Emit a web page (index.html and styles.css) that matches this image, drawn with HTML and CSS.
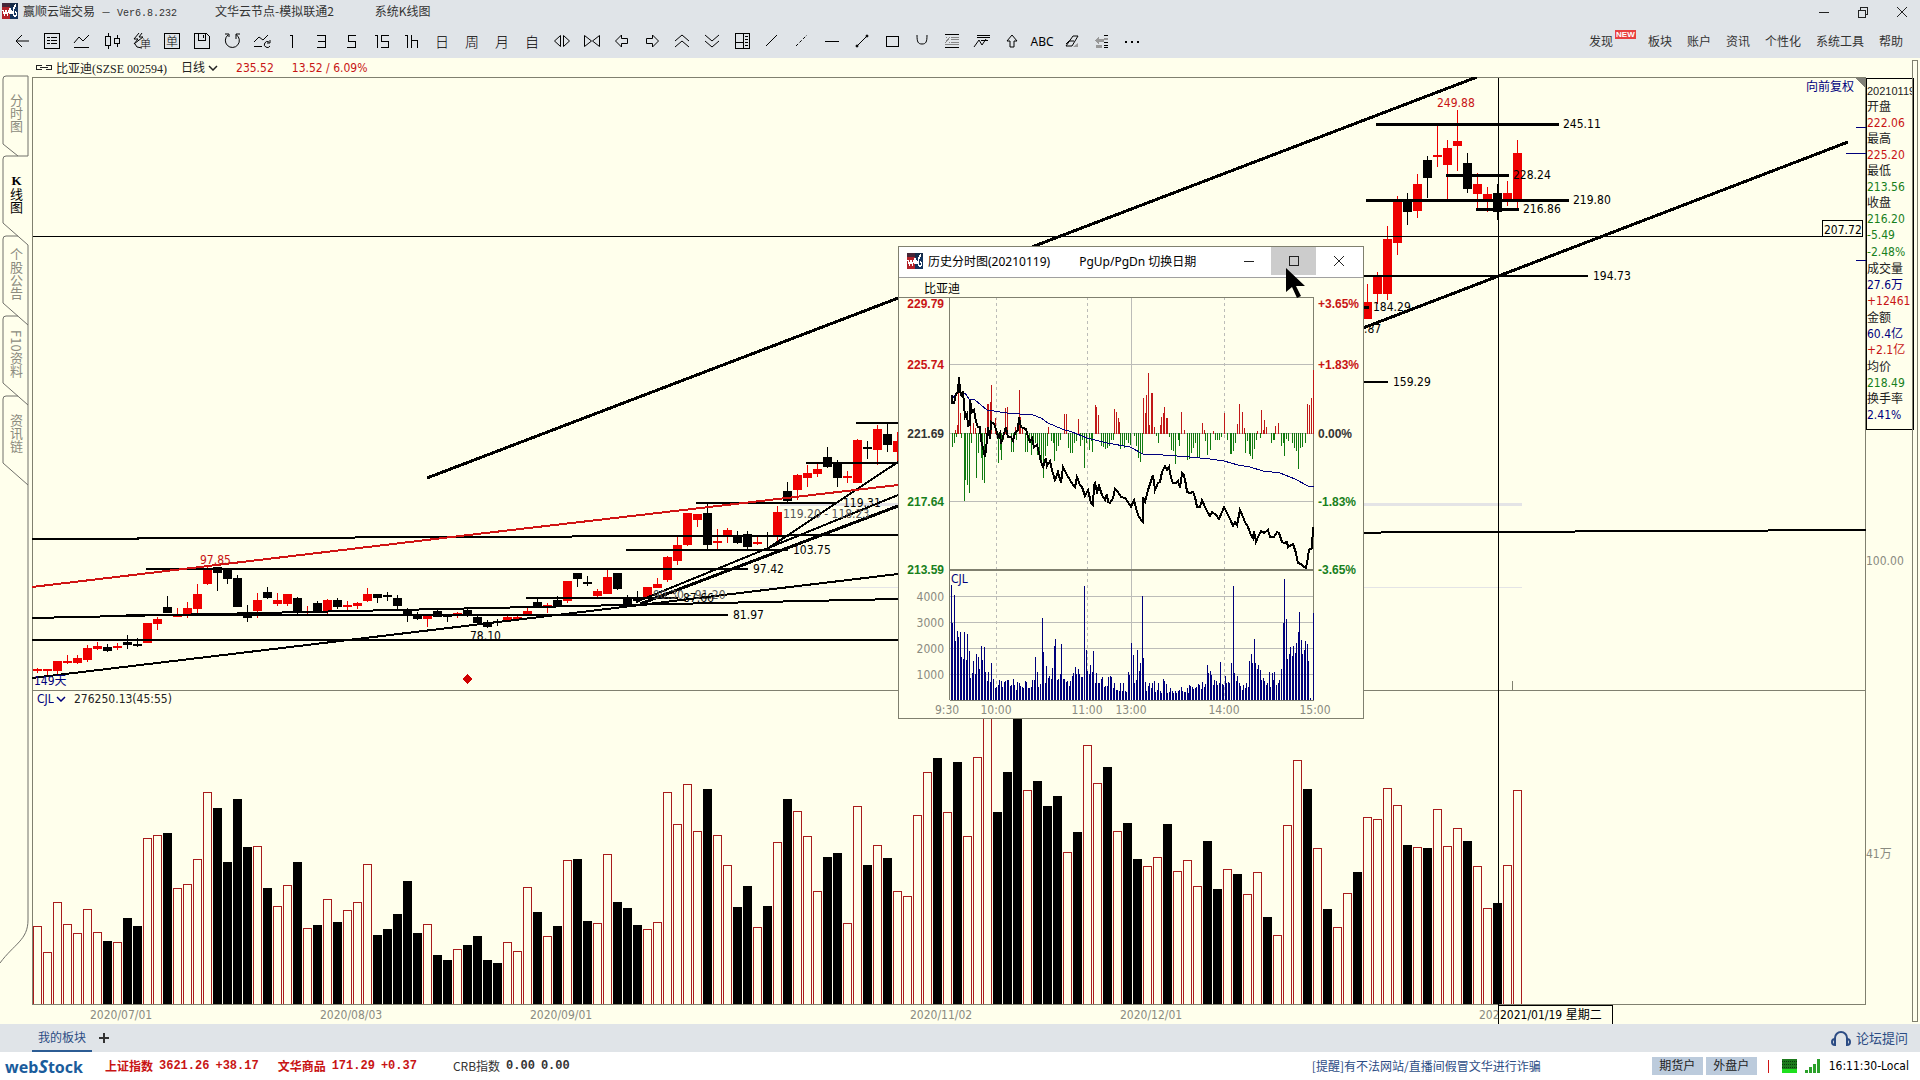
FILE: index.html
```html
<!DOCTYPE html>
<html lang="zh-CN">
<head>
<meta charset="utf-8">
<title>赢顺云端交易</title>
<link rel="stylesheet" href="styles.css">
</head>
<body>
<svg class="defs" aria-hidden="true">
  <symbol id="logo" viewBox="0 0 16 16">
    <path d="M0 0h8v16H0z" fill="#b3222a"/><path d="M8 0h8v16H8z" fill="#14345e"/>
    <path d="M0 0h16v4H0z" fill="#17283f" opacity=".7"/>
    <path d="M1 7l1.500 4L4 8l1.500 3L7 7M8 5v6M8 9c1-2 2-2 2 2M14 2c-3 2-4 10-1 11 2 0 2-4 0-4" fill="none" stroke="#fff" stroke-width="1.500"/>
  </symbol>
  <symbol id="chevron" viewBox="0 0 10 6"><path d="M1 1l4 4 4-4" fill="none" stroke="currentColor" stroke-width="1.500"/></symbol>
</svg>

<header class="header">
  <div class="titlebar">
    <svg class="logo"><use href="#logo"/></svg>
    <h1 class="title">赢顺云端交易<span class="mono">&nbsp;－&nbsp;Ver6.8.232</span></h1>
    <span class="title title-node">文华云节点-模拟联通2</span>
    <span class="title">系统K线图</span>
    <div class="window-controls">
      <button aria-label="最小化"><svg viewBox="0 0 12 12"><path d="M1 6.500h10"/></svg></button>
      <button aria-label="还原"><svg viewBox="0 0 12 12"><path d="M1.500 4.500h7v7h-7zM3.500 4.500v-3h7v7h-2"/></svg></button>
      <button aria-label="关闭"><svg viewBox="0 0 12 12" class="smooth"><path d="M1 1l10 10M11 1L1 11"/></svg></button>
    </div>
  </div>
  <div class="toolbar-row">
    <div class="toolbar">
      <button aria-label="返回"><svg viewBox="0 0 20 20" class="smooth"><path d="M17 10H4M10 4l-6 6 6 6"/></svg></button>
      <button aria-label="报价列表"><svg viewBox="0 0 20 20"><path d="M2.500 2.500h15v15h-15zM5 6.500h3M9 6.500h6M5 9.500h3M9 9.500h6M5 12.500h3M9 12.500h6"/></svg></button>
      <button aria-label="分时"><svg viewBox="0 0 20 20" class="smooth"><path d="M2 12l5-6 4 4 6-6M2 16.500h15"/></svg></button>
      <button aria-label="K线"><svg viewBox="0 0 20 20"><path d="M3.500 5.500h5v9h-5zM6 2v3M6 15v3M12.500 7.500h5v5h-5zM15 4v3M15 13v3"/></svg></button>
      <button class="glyph" aria-label="闪电下单"><svg viewBox="0 0 20 20" class="smooth"><path d="M7 2L2 8h4l-4 5 9-7H7l3-4M3 13l2 3 5 1"/><text x="8" y="17" font-size="11">单</text></svg></button>
      <button class="glyph" aria-label="下单"><svg viewBox="0 0 20 20"><path d="M2.500 2.500h15v15h-15z"/><text x="4" y="15" font-size="12">单</text></svg></button>
      <button aria-label="保存"><svg viewBox="0 0 20 20"><path d="M2.500 2.500h12l3 3v12h-15zM6.500 3v6h7V3M11.500 4v3"/></svg></button>
      <button aria-label="刷新"><svg viewBox="0 0 20 20" class="smooth"><path d="M6 4a7 7 0 1 0 8-.5M14 8V3h4M3 3h4v3"/></svg></button>
      <button aria-label="切换走势"><svg viewBox="0 0 20 20" class="smooth"><path d="M2 11l5-5 4 3 5-5M2 15.500h8M17 11a3 3 0 1 0 1 4M18 9v3h-3"/></svg></button>
      <button aria-label="1分钟"><svg viewBox="0 0 20 20"><path d="M8 4.500h2.500V17"/></svg></button>
      <button aria-label="3分钟"><svg viewBox="0 0 20 20"><path d="M5 4.500h8.500v12H5M6 10.500h7"/></svg></button>
      <button aria-label="5分钟"><svg viewBox="0 0 20 20"><path d="M14 4.500H6.500v6h7v6H5"/></svg></button>
      <button aria-label="15分钟"><svg viewBox="0 0 20 20"><path d="M3 4.500h2.500V17M17 4.500H9.500v6h7v6H9"/></svg></button>
      <button aria-label="1小时"><svg viewBox="0 0 20 20"><path d="M3 4.500h2.500V17M9.500 4v13M9.500 9.500h6V17"/></svg></button>
      <button>日</button>
      <button>周</button>
      <button>月</button>
      <button>自</button>
      <button aria-label="放大"><svg viewBox="0 0 20 20" class="smooth"><path d="M8.500 4.500v11L2.500 10zM11.500 4.500v11l6-5.500z"/></svg></button>
      <button aria-label="缩小"><svg viewBox="0 0 20 20" class="smooth"><path d="M2.500 4.500v11L9.500 10zM17.500 4.500v11L10.500 10z"/></svg></button>
      <button aria-label="左移"><svg viewBox="0 0 20 20" class="smooth"><path d="M3.500 10l6-6v3.500h6v5h-6V16z"/></svg></button>
      <button aria-label="右移"><svg viewBox="0 0 20 20" class="smooth"><path d="M16.500 10l-6-6v3.500h-6v5h6V16z"/></svg></button>
      <button aria-label="上翻"><svg viewBox="0 0 20 20" class="smooth"><path d="M3 10l7-6 7 6M3 16l7-6 7 6"/></svg></button>
      <button aria-label="下翻"><svg viewBox="0 0 20 20" class="smooth"><path d="M3 4l7 6 7-6M3 10l7 6 7-6"/></svg></button>
      <button aria-label="画面组合"><svg viewBox="0 0 20 20"><path d="M3.500 2.500h14v15h-14zM11.500 3v14M4 11.500h7M13 5.500h3M13 8.500h3M13 11.500h3M13 14.500h3"/></svg></button>
      <button aria-label="线段"><svg viewBox="0 0 20 20" class="smooth"><path d="M4 15L15 4"/></svg></button>
      <button aria-label="虚线"><svg viewBox="0 0 20 20" class="smooth"><path d="M4 15L15 4" stroke-dasharray="3 2"/></svg></button>
      <button aria-label="水平线"><svg viewBox="0 0 20 20"><path d="M3 10.500h14"/></svg></button>
      <button aria-label="两点线"><svg viewBox="0 0 20 20" class="smooth"><path d="M5 15L15 5"/><circle cx="5" cy="15" r="1" fill="#000"/><circle cx="15" cy="5" r="1" fill="#000"/></svg></button>
      <button aria-label="矩形"><svg viewBox="0 0 20 20"><path d="M4.500 5.500h12v10h-12z"/></svg></button>
      <button aria-label="弧线"><svg viewBox="0 0 20 20" class="smooth"><path d="M5 4c0 7 1 9 5 9s5-2 5-9"/></svg></button>
      <button aria-label="百分比线"><svg viewBox="0 0 20 20"><path d="M3 3.500h14M3 16.500h14"/><path class="dim" d="M9 6.500h8M9 8.500h8M9 11.500h8M3 13.500h14M3 12l5-6M4 6.500h1M7 11.500h1"/></svg></button>
      <button aria-label="压力线"><svg viewBox="0 0 20 20"><path d="M5 4.500h13M5 6.500h13M9 9.500h7"/><path class="smooth" d="M2 16l5-7 3 5 4-6"/></svg></button>
      <button aria-label="箭头"><svg viewBox="0 0 20 20" class="smooth"><path d="M10 4l-5 6h3v6h4v-6h3z"/></svg></button>
      <button class="abc">ABC</button>
      <button aria-label="橡皮"><svg viewBox="0 0 20 20" class="smooth"><path class="dimfill" d="M11 16l5-4v4z"/><path d="M4 15l7-10h5l-6 10zM4 13l3-3h5"/></svg></button>
      <button aria-label="工具面板"><svg viewBox="0 0 20 20"><path class="dimfill" d="M3 9l4-4v3h5v3H7v3zM4 14h6v3H4zM12 7h4v2h-4z"/><path d="M12 4.500h4M12 11.500h4M12 14.500h4M12 16.500h4"/></svg></button>
      <button aria-label="更多"><svg viewBox="0 0 20 20"><path d="M3 11h2M9 11h2M15 11h2" stroke-width="2"/></svg></button>
    </div>
    <nav class="menu">
      <a href="#" class="has-badge">发现<span class="badge">NEW</span></a>
      <a href="#">板块</a><a href="#">账户</a><a href="#">资讯</a><a href="#">个性化</a><a href="#">系统工具</a><a href="#">帮助</a>
    </nav>
  </div>
</header>

<main class="workspace">
  <nav class="rail">
    <svg class="rail-lines" viewBox="0 0 32 966"><path d="M28 18H6q-3 0-3 3v65l15 12M28 18v80H6q-3 0-3 3v64l25 22M18 178H6q-3 0-3 3v64l25 22M18 258H6q-3 0-3 3v64l25 22M18 338H6q-3 0-3 3v64l25 22M28 187v675c0 20-14 24-28 43"/></svg>
    <button class="tab">分时图</button>
    <button class="tab tab-active"><b class="upright">K</b>线图</button>
    <button class="tab">个股公告</button>
    <button class="tab">F10资料</button>
    <button class="tab">资讯链</button>
  </nav>

  <section class="chart-area">
    <div class="infobar">
      <svg class="chain" viewBox="0 0 18 8"><path d="M7 1.500H1.500v4H7M11 1.500h5.500v4H11M5 3.500h8"/></svg>
      <span class="symbol">比亚迪(SZSE 002594)</span>
      <span class="picker"><select aria-label="周期"><option>日线</option></select><svg><use href="#chevron"/></svg></span>
      <span class="red quote">235.52</span>
      <span class="red quote">13.52 / 6.09%</span>
    </div>
    <div class="chart-box">
      <svg class="chart" viewBox="32 77 1834 947">
        <g id="candles"></g>
        <g id="volumes"></g>
        <path class="frame" d="M32 77.500H1866M32.500 77V1004M1865.500 77V1004M32 1004.500H1866M32 690.500H1866M1512.500 681v9"/>
        <path class="pale wide" d="M780 504.500H898M1363 504.500H1522"/>
        <path class="pale" d="M700 587.500H898M1363 587.500H1522"/>
        <g class="ink">
          <path class="w3" d="M427 478L1477 77M1363 328L1848 142M640 604L898 506M1376 124.500H1559M1446 175.500H1509M1366 200.500H1569M1476 209.500H1519M1363 307.500H1369"/>
          <path class="w2" d="M1363 276H1588M1363 382H1388M32 539L898 535 1866 530M146 569H748M126 615H728M32 618L898 599M32 640H898M32 678L898 574M636 602L898 495M767 549L898 462M696 503H837M626 550H788M526 598H678M856 423H898M806 463H898"/>
          <path class="cross" d="M33 236.500H1863M1498.500 78V1024"/>
        </g>
        <path class="trend" d="M32 587L460 536 898 485"/>
        <path d="M467 674l5 5-5 5-5-5z" fill="#d00000"/>
        <path d="M1856 78h9v10z" fill="#808078"/>
        <path class="tick" d="M1856 127.500h10M1846 153.500h20M1856 260.500h10"/>
        <g class="labels">
          <text x="1437" y="107" class="f-red">249.88</text>
          <text x="1563" y="128">245.11</text>
          <text x="1513" y="179">228.24</text>
          <text x="1573" y="204">219.80</text>
          <text x="1523" y="213">216.86</text>
          <text x="1593" y="280">194.73</text>
          <text x="1373" y="311">184.29</text>
          <text x="1364" y="333">.87</text>
          <text x="1393" y="386">159.29</text>
          <text x="200" y="564" class="f-red">97.85</text>
          <text x="843" y="507">119.31</text>
          <text x="783" y="518" class="f-soft">119.20 - 118.23</text>
          <text x="793" y="554">103.75</text>
          <text x="753" y="573">97.42</text>
          <text x="653" y="599" class="f-soft">90.30 - 91.20</text>
          <text x="683" y="602">87.66</text>
          <text x="733" y="619">81.97</text>
          <text x="470" y="640">78.10</text>
          <text x="34" y="685" class="f-navy">149天</text>
          <text x="1806" y="91" class="f-navy">向前复权</text>
          <g class="f-gray">
            <text x="90" y="1019">2020/07/01</text>
            <text x="320" y="1019">2020/08/03</text>
            <text x="530" y="1019">2020/09/01</text>
            <text x="910" y="1019">2020/11/02</text>
            <text x="1120" y="1019">2020/12/01</text>
            <text x="1479" y="1019">202</text>
          </g>
          <path class="callout" d="M1822.500 220.500h40v16h-40zM1498.500 1024v-18.500h114V1024"/>
          <text x="1824" y="234">207.72</text>
          <text x="1500" y="1019">2021/01/19 星期二</text>
        </g>
      </svg>

      <div class="indicator">
        <span class="picker navy"><select aria-label="指标"><option>CJL</option></select><svg><use href="#chevron"/></svg></span>
        <span>276250.13(45:55)</span>
      </div>

      <section class="popup">
        <header class="popup-title">
          <svg class="logo"><use href="#logo"/></svg>
          <h2>历史分时图(20210119)</h2>
          <span>PgUp/PgDn 切换日期</span>
          <div class="popup-controls">
            <button aria-label="最小化"><svg viewBox="0 0 12 12"><path d="M1 6.500h10"/></svg></button>
            <button class="hover" aria-label="最大化"><svg viewBox="0 0 12 12"><path d="M1.500 1.500h9v9h-9z"/></svg></button>
            <button aria-label="关闭"><svg viewBox="0 0 12 12" class="smooth"><path d="M1 1l10 10M11 1L1 11"/></svg></button>
          </div>
        </header>
        <svg class="intraday" viewBox="899 278 464 440">
          <path class="grid" d="M950 364.500H1313M950 433.500H1313M950 501.500H1313M950 596.500H1313M950 622.500H1313M950 648.500H1313M950 674.500H1313M1131.500 297V700"/>
          <path class="grid dashed" d="M996.500 297V700M1087.500 297V700M1224.500 297V700"/>
          <path class="frame" d="M899 297.500H1314M949.500 297V700M1313.500 297V700M950 700.500H1314"/>
          <path class="frame strong" d="M950 570H1314"/>
          <g id="flow"></g>
          <g id="minute-volume"></g>
          <polyline id="average" class="average"/>
          <polyline id="price" class="price"/>
          <text x="924" y="293" class="name">比亚迪</text>
          <g class="scale" text-anchor="end">
            <text x="944" y="308" class="f-red">229.79</text>
            <text x="944" y="369" class="f-red">225.74</text>
            <text x="944" y="438">221.69</text>
            <text x="944" y="506" class="f-green">217.64</text>
            <text x="944" y="574" class="f-green">213.59</text>
          </g>
          <g class="scale">
            <text x="1318" y="308" class="f-red">+3.65%</text>
            <text x="1318" y="369" class="f-red">+1.83%</text>
            <text x="1318" y="438">0.00%</text>
            <text x="1318" y="506" class="f-green">-1.83%</text>
            <text x="1318" y="574" class="f-green">-3.65%</text>
          </g>
          <text x="951" y="583" class="f-navy">CJL</text>
          <g class="f-gray" text-anchor="end">
            <text x="944" y="601">4000</text><text x="944" y="627">3000</text><text x="944" y="653">2000</text><text x="944" y="679">1000</text>
          </g>
          <g class="f-gray" text-anchor="middle">
            <text x="947" y="714">9:30</text><text x="996" y="714">10:00</text><text x="1087" y="714">11:00</text><text x="1131" y="714">13:00</text><text x="1224" y="714">14:00</text><text x="1315" y="714">15:00</text>
          </g>
        </svg>
        <svg class="pointer" viewBox="0 0 19 30"><path d="M0 0v24l6-5 5 11 4-2-5-10h9z"/></svg>
      </section>
    </div>
  </section>

  <aside class="side">
    <dl class="data">
      <dt class="date">20210119</dt>
      <dt>开盘</dt><dd class="red">222.06</dd>
      <dt>最高</dt><dd class="red">225.20</dd>
      <dt>最低</dt><dd class="green">213.56</dd>
      <dt>收盘</dt><dd class="green">216.20</dd><dd class="green delta">-5.49</dd><dd class="green delta">-2.48%</dd>
      <dt>成交量</dt><dd class="navy">27.6万</dd><dd class="red delta">+12461</dd>
      <dt>金额</dt><dd class="navy">60.4亿</dd><dd class="red delta">+2.1亿</dd>
      <dt>均价</dt><dd class="green">218.49</dd>
      <dt>换手率</dt><dd class="navy">2.41%</dd>
    </dl>
    <span class="axis">100.00</span>
    <span class="axis axis-volume">41万</span>
  </aside>
</main>

<nav class="boards">
  <a href="#" class="board">我的板块</a>
  <button class="add" aria-label="添加板块"><svg viewBox="0 0 12 12"><path d="M6 1v10M1 6h10"/></svg></button>
  <a href="#" class="forum"><svg viewBox="0 0 20 18"><path d="M4 15V9a6 6 0 0 1 12 0v6M4 10c-4 0-4 6 0 6zM16 10c4 0 4 6 0 6z"/></svg>论坛提问</a>
</nav>

<footer class="status">
  <span class="brand">web<span class="brand-s">S</span>tock</span>
  <div class="index red"><b>上证指数</b><b class="num">3621.26</b><b class="num">+38.17</b></div>
  <div class="index red"><b>文华商品</b><b class="num">171.29</b><b class="num">+0.37</b></div>
  <div class="index index-crb"><span>CRB指数</span><b class="num">0.00</b><b class="num">0.00</b></div>
  <a href="#" class="notice">[提醒]有不法网站/直播间假冒文华进行诈骗</a>
  <div class="status-right">
    <button class="account">期货户</button>
    <button class="account">外盘户</button>
    <span class="bar"></span>
    <svg class="net" viewBox="0 0 15 14"><path d="M0 0h15v10H0z" fill="#1c7a1c"/><path d="M0 10h15v4H0z" fill="#1ee01e"/><path d="M0 2.500h15M0 5.500h15M0 8.500h15" stroke="#0a3a0a" stroke-dasharray="1 1"/></svg>
    <svg class="signal" viewBox="0 0 16 14"><path d="M0 11h3v3H0zM4 8h3v6H4zM8 5h3v9H8zM12 0h3v14h-3z" fill="#2aa02a"/></svg>
    <span class="clock">16:11:30-Local</span>
  </div>
</footer>
<script src="chart.js"></script>
</body>
</html>
```
FILE: styles.css
```css
* { box-sizing: border-box; }
body {
  margin: 0;
  min-height: 100vh;
  display: flex;
  flex-direction: column;
  background: #ffffec;
  color: #222;
  font: 12px/16px "DejaVu Sans Condensed", "Noto Sans CJK SC", sans-serif;
}
button, select {
  margin: 0;
  padding: 0;
  border: 0;
  background: none;
  color: inherit;
  font: inherit;
  appearance: none;
}
a { color: inherit; text-decoration: none; }
h1, h2 { margin: 0; font-size: 12px; font-weight: 400; }
svg { display: block; shape-rendering: crispEdges; }
.smooth { shape-rendering: auto; }
.defs { position: absolute; width: 0; height: 0; }
.red { color: #c81414; }
.green { color: #18801c; }
.navy { color: #00007c; }

/* header */
.header { background: #e0e4e8; }
.titlebar { display: flex; align-items: center; height: 24px; padding: 0 12px 2px 2px; color: #333; }
.logo { width: 16px; height: 16px; }
.title { margin-left: 5px; white-space: nowrap; font-family: "Noto Sans CJK SC", sans-serif; }
.mono { font: 10px "Liberation Mono", "Noto Sans CJK SC", monospace; }
.title-node { margin: 0 36px 0 38px; }
.window-controls { margin-left: auto; display: flex; gap: 27px; padding-top: 2px; }
.window-controls svg, .popup-controls svg { width: 12px; height: 12px; fill: none; stroke: #222; }
.toolbar-row { display: flex; align-items: center; height: 34px; }
.toolbar { display: flex; padding-left: 7px; }
.toolbar button {
  flex: none;
  width: 30px;
  height: 30px;
  display: flex;
  align-items: center;
  justify-content: center;
  color: #000;
  font: 300 14px "Noto Sans CJK SC", sans-serif;
}
.toolbar svg { width: 20px; height: 20px; fill: none; stroke: #000; }
.toolbar text { fill: #000; stroke: none; }
.toolbar .dim { stroke: #888; }
.toolbar .dimfill { fill: #999; stroke: none; }
.toolbar .abc { font: 12px "Noto Sans", sans-serif; }
.menu { margin-left: auto; display: flex; gap: 15px; padding-right: 17px; color: #333; white-space: nowrap; font-family: "Noto Sans CJK SC", sans-serif; }
.has-badge { display: flex; gap: 2px; margin-right: -3px; }
.badge { align-self: flex-start; width: 21px; height: 9px; margin-top: -3px; background: #e84040; color: #fff; font: bold 8px/9px "Liberation Sans", sans-serif; text-align: center; }

/* workspace */
.workspace { flex: 1; display: grid; grid-template-columns: 32px minmax(0, 1fr) 54px; }
.rail { position: relative; padding-top: 18px; display: flex; flex-direction: column; }
.rail-lines { position: absolute; inset: 0 auto auto 0; width: 32px; height: 966px; fill: none; stroke: #70706a; shape-rendering: auto; }
.tab { position: relative; width: 32px; height: 80px; padding-bottom: 5px; color: #8c8c80; writing-mode: vertical-rl; font: 13px/32px "Noto Sans CJK SC", sans-serif; text-align: center; }
.tab-active { color: #000; }
.upright { font-family: "Liberation Serif", serif; text-orientation: upright; }
.infobar { display: flex; align-items: center; height: 19px; padding-left: 3px; white-space: nowrap; }
.chain { width: 18px; height: 8px; fill: none; stroke: #222; }
.symbol { margin: 0 14px 0 3px; font: 12px "Liberation Serif", "Noto Sans CJK SC", serif; }
.picker { display: flex; align-items: center; gap: 2px; }
.picker svg { width: 10px; height: 6px; shape-rendering: auto; }
.quote { margin-left: 18px; }
.chart-box { position: relative; }
.chart { width: 100%; height: auto; }
.frame { fill: none; stroke: #80806f; }
.strong { stroke-width: 2; }
.pale { stroke: #e4e4e6; }
.wide { stroke-width: 3; }
.ink { fill: none; stroke: #000; }
.w3 { stroke-width: 3; }
.w2 { stroke-width: 2; }
.cross { stroke-width: 1; }
.trend { fill: none; stroke: #d01414; stroke-width: 2; }
.tick { stroke: #00007c; }
.callout { fill: #ffffec; stroke: #000; }
.f-red { fill: #c81414; }
.f-navy { fill: #00007c; }
.f-green { fill: #18801c; }
.f-soft { fill: #555; }
.f-gray { fill: #8a8a80; }
.up { fill: #ee0000; stroke: none; }
.down { fill: #000; stroke: none; }
.up-volume { fill: #ffffec; stroke: #a81c1c; }
.indicator { position: absolute; left: 5px; top: 614px; display: flex; gap: 8px; }

/* history window */
.popup { position: absolute; left: 866px; top: 169px; width: 466px; border: 1px solid #80806f; background: #ffffec; }
.popup-title { display: flex; align-items: center; height: 31px; padding: 0 2px 2px 8px; border-bottom: 1px solid #a0a0a0; background: #fff; color: #000; font: 12px "Noto Sans", "Noto Sans CJK SC", sans-serif; white-space: nowrap; }
.popup-title h2 { margin: 0 29px 0 5px; }
.popup-controls { margin-left: auto; display: flex; }
.popup-controls button { width: 45px; height: 28px; display: flex; align-items: center; justify-content: center; }
.popup-controls .hover { background: #ccc; }
.intraday { width: 464px; height: 440px; }
.grid { stroke: #bcbcb8; }
.dashed { stroke-dasharray: 3 3; }
.scale { font: bold 12px "Liberation Sans", sans-serif; fill: #333; }
.scale .f-red { fill: #c81414; }
.scale .f-green { fill: #18801c; }
.price { fill: none; stroke: #000; stroke-width: 2; }
.average { fill: none; stroke: #00007c; }
.pointer { position: absolute; left: 387px; top: 21px; width: 19px; height: 30px; fill: #000; shape-rendering: auto; }

/* data column */
.side { position: relative; margin: 2px 2px 2px 0; padding-top: 18px; }
.side::after { content: ""; position: absolute; top: 0; right: 0; bottom: 0; width: 4px; border: 1px solid #80806f; }
.data { width: 48px; height: 352px; margin: 0; padding-top: 4px; border: 1px solid #000; overflow: hidden; line-height: 16px; white-space: nowrap; }
.data dt, .data dd { margin: 0; }
.data .delta { line-height: 17px; }
.data .date { font-family: "Liberation Sans", sans-serif; font-size: 11px; }
.axis { display: block; margin-top: 123px; color: #8a8a80; }
.axis-volume { margin-top: 277px; }

/* bottom bars */
.boards { display: flex; align-items: center; height: 28px; padding: 0 12px 0 32px; background: #e0e4e8; color: #2c4c84; font-family: "Noto Sans CJK SC", sans-serif; }
.board { height: 28px; padding: 0 6px; border-bottom: 2px solid #2c5c94; line-height: 26px; }
.add { margin-left: 6px; }
.add svg { width: 12px; height: 12px; stroke: #333; stroke-width: 2; }
.forum { margin-left: auto; display: flex; align-items: center; gap: 5px; font-size: 13px; }
.forum svg { width: 20px; height: 18px; fill: none; stroke: currentColor; stroke-width: 2; shape-rendering: auto; }
.status { display: flex; align-items: center; height: 28px; padding: 0 11px 0 5px; background: #fff; white-space: nowrap; }
.brand { width: 100px; color: #1a5c9c; font: bold 16px "Noto Sans", sans-serif; }
.brand-s { font-size: 18px; font-style: italic; }
.index { display: flex; align-items: center; gap: 6px; margin-right: 19px; font-family: "Noto Sans CJK SC", sans-serif; }
.index-crb { margin-left: 17px; color: #333; }
.num { font-family: "Liberation Mono", monospace; }
.notice { margin-left: auto; color: #2c4c84; font-family: "Noto Sans CJK SC", sans-serif; }
.status-right { display: flex; align-items: center; margin-left: 111px; }
.account { width: 51px; height: 18px; margin-right: 3px; background: #bccbdc; line-height: 18px; }
.bar { width: 1px; height: 13px; margin: 0 13px 0 8px; background: #d01414; }
.net { width: 15px; height: 14px; }
.signal { width: 16px; height: 14px; margin: 0 8px; }
.clock { color: #000; }
```
FILE: chart.js
```js
const NS = 'http://www.w3.org/2000/svg';

function rect(parent, cls, x, y, w, h) {
  const r = document.createElementNS(NS, 'rect');
  if (cls) r.setAttribute('class', cls);
  r.setAttribute('x', x);
  r.setAttribute('y', y);
  r.setAttribute('width', w);
  r.setAttribute('height', Math.max(h, 1));
  parent.appendChild(r);
}

// All series use three units per chart pixel.
const UNIT = 3;
const px = (origin, v) => origin + Math.round(v / UNIT);
const PITCH = 10;
const FIRST = 37;

// Each candle: direction, high, body top, body bottom, low.
const segments = [
  { start: 0, origin: 500, rows: `r 503 508 513 518|r 507 507 513 528|r 483 483 514 522|r 465 483 489 492|r 465 474 489 492|r 435 443 480 486|r 426 438 447 450|b 432 441 453 456|r 429 438 443 450|b 405 426 435 447|b 414 432 438 440|r 369 369 429 429|r 351 357 372 390|b 288 321 339 340|r 324 345 351 351|r 306 324 343 354|r 252 282 327 339|r 195 204 252 255|b 201 201 219 273|b 207 209 237 252|b 225 234 321 321|b 315 336 354 366|r 279 300 333 354|b 261 276 294 297|r 279 300 312 318|r 282 282 312 318|b 291 294 336 343|r 318 333 336 343|b 303 309 336 336|r 297 300 336 342|b 294 300 321 327|r 303 315 320 330|r 305 309 318 327|r 264 282 303 306|b 282 282 294 309|b 276 286 291 303|b 285 294 318 327|b 324 330 347 366|b 336 342 357 360|r 345 347 358 381|b 330 333 350 350|b 345 345 350 366|r 336 338 344 354|b 327 330 348 351|b 345 350 369 375` },
  { start: 45, origin: 400, rows: `b 660 666 681 684|b 657 664 668 678|r 648 651 664 667|r 642 651 661 663|r 618 633 645 648|b 597 606 621 624|r 609 614 620 639|b 588 600 621 622|r 543 543 603 609|b 519 519 537 560|b 528 546 552 558|r 567 573 588 591|r 510 531 582 582|b 519 519 567 570|b 585 591 618 621|b 573 594 603 609|r 560 561 594 598|r 534 552 564 564|r 468 471 540 546|r 411 435 483 495|r 338 339 435 438|r 342 342 360 381|b 310 339 435 446|r 387 424 430 446|r 384 390 404 428|b 393 410 429 432|b 393 402 440 447|r 411 426 432 435|b 396 404 412 444|r 318 336 408 424|b 246 273 303 306|r 222 225 270 300|r 195 219 234 261|r 191 207 222 231|b 141 171 201 204|b 180 192 234 261|r 213 228 234 249|r 117 120 249 249|b 123 142 147 177|r 75 87 150 195|b 69 102 135 156|r 96 123 156 183` },
  { start: 133, origin: 80, rows: `r 612 666 717 717|r 576 590 642 672|r 438 477 642 660|r 348 363 489 525|b 339 360 396 435|r 282 312 393 414|b 228 240 294 354|r 138 225 231 261|r 180 204 255 357|r 90 183 198 273|b 219 249 327 339|r 279 312 342 390|r 321 342 357 396|b 312 339 396 420|r 303 339 357 378|r 180 219 357 387` }
];

const candles = document.getElementById('candles');
for (const seg of segments) {
  seg.rows.split('|').forEach((row, i) => {
    const [dir, ...v] = row.split(' ');
    const [high, top, bottom, low] = v.map(n => px(seg.origin, +n));
    const x = FIRST + (seg.start + i) * PITCH;
    const cls = dir === 'r' ? 'up' : 'down';
    rect(candles, cls, x, high, 1, low - high);
    rect(candles, cls, x - 4, top, 9, bottom - top);
  });
}

// Daily volume: direction and bar top.
const daily = `r499 r577 r427 r493 r520 r448 r517 b543 r547 b474 b498 r235 r226 b219 r385 r373 r298 r97 b144 b306 b117 b261 r259 b384 r439 r376 b306 r505 b495 r418 b486 r451 r427 r313 b525 b507 b462 b363 b519 r493 b585 b600 r568 b555 b528 b600 b609 r547 r574 r382 b456 r529 b498 r301 b297 b483 r490 r283 b426 b444 b495 r508 r487 r97 r193 r73 r214 b87 r226 r316 b441 b378 r502 b438 r247 b117 r154 r229 r394 b291 b279 r490 r139 b315 r256 b294 r394 r409 r166 r37 b-6 r157 b6 r229 r-8 r-200 b156 b36 b-200 r91 b63 b138 b108 r277 b216 r-44 r70 b21 r214 b189 b297 r319 r292 b192 r334 r301 r379 b243 b387 r328 b342 r403 r337 b471 r526 r196 r1 b87 r265 b447 r502 r400 b336 r172 r178 r85 r136 b255 r262 b264 r148 r259 r205 b243 r319 r445 b429 r316 r91`.split(' ');
const volumes = document.getElementById('volumes');
daily.forEach((bar, i) => {
  const x = FIRST - 4 + i * PITCH;
  const y = px(760, +bar.slice(1));
  if (bar[0] === 'r') rect(volumes, 'up-volume', x + 0.5, y + 0.5, 8, 1004 - y);
  else rect(volumes, 'down', x, y, 9, 1004 - y);
});

// Intraday window: "x,length" or "x,y" pairs.
const LEFT = 890;
const TOP = 240;
const pairs = s => s.trim().split(/\s+/).map(p => p.split(',').map(Number));

const rise = pairs(`197,10 203,25 206,155 211,60 240,95 250,30 256,15 285,15 292,88 296,88 302,95 305,145 317,45 347,75 352,80 375,20 388,130 392,50 398,20 476,20 523,58 529,58 565,42 617,85 620,80 626,55 674,72 680,65 684,45 689,35 760,105 766,60 770,115 775,180 779,25 785,122 788,122 794,18 811,25 815,50 820,60 824,80 830,45 833,45 874,65 882,10 937,32 942,10 970,8 1003,62 1042,28 1048,88 1058,65 1064,15 1103,8 1114,70 1119,10 1123,40 1130,20 1157,22 1166,30 1253,88 1257,25 1259,85 1264,105 1270,190`);
const fall = pairs(`187,42 193,30 199,12 214,15 223,203 227,140 232,155 238,180 243,30 259,135 266,60 274,75 278,140 284,150 325,90 330,50 335,80 341,20 365,58 370,58 378,20 406,58 411,58 418,30 424,65 430,40 436,30 442,65 448,60 454,80 460,135 466,70 472,40 485,25 490,30 494,85 500,55 505,40 511,20 536,45 541,60 547,60 553,30 560,25 572,40 578,20 583,105 590,30 598,50 604,25 608,58 634,40 640,42 646,48 652,45 658,38 664,22 670,22 692,48 697,35 702,45 708,20 714,30 720,35 733,8 740,40 746,75 752,88 757,62 800,8 806,30 838,12 845,50 850,55 856,92 864,20 869,40 893,80 899,78 904,60 909,45 917,30 921,72 928,75 947,25 953,65 962,50 975,20 982,22 989,20 995,12 1012,22 1020,62 1025,62 1031,55 1037,30 1067,60 1072,25 1077,62 1081,70 1088,78 1094,48 1099,20 1110,15 1145,30 1150,20 1154,22 1175,40 1180,30 1184,70 1190,18 1196,25 1208,30 1214,45 1220,55 1226,108 1232,45 1238,42 1245,30`);
const flow = document.getElementById('flow');
flow.setAttribute('stroke', 'none');
rise.forEach(([x, n]) => {
  const y = px(TOP, 580 - n);
  rect(flow, 'rise', px(LEFT, x - 1), y, 1, 434 - y);
});
fall.forEach(([x, n]) => rect(flow, 'fall', px(LEFT, x - 1), 433, 1, Math.round(n / UNIT)));
flow.querySelectorAll('.rise').forEach(r => r.setAttribute('fill', '#c01818'));
flow.querySelectorAll('.fall').forEach(r => r.setAttribute('fill', '#107a10'));

const minutes = pairs(`184,345 187,232 193,315 196,178 202,207 205,188 211,204 214,130 220,122 223,204 229,120 232,198 238,147 241,65 247,80 250,117 256,78 259,138 265,130 268,92 274,162 277,120 283,160 286,85 292,56 295,85 301,53 304,111 310,62 316,35 319,40 325,45 328,60 334,58 337,38 343,54 346,58 352,60 355,60 361,43 364,45 370,62 373,45 379,30 382,53 388,50 391,42 397,38 400,35 406,58 409,55 415,36 418,36 424,38 427,60 433,60 436,130 442,85 445,38 451,48 457,245 460,145 466,52 469,103 475,65 478,72 484,64 487,95 493,162 496,183 502,60 505,62 511,78 514,168 520,63 523,62 529,55 532,58 538,42 541,58 547,72 550,80 556,98 559,78 565,92 568,78 574,70 577,68 583,342 589,150 592,86 598,78 601,104 607,84 610,146 616,50 619,82 625,50 628,50 634,62 637,68 643,38 646,42 652,42 655,68 661,72 664,70 670,36 673,50 679,30 682,30 688,28 691,50 697,26 700,50 706,28 709,24 715,84 718,76 724,172 730,135 733,50 739,60 742,150 748,86 751,112 757,312 760,126 766,53 769,28 775,42 778,50 784,36 787,50 793,56 796,24 802,30 805,50 811,28 814,20 820,62 823,58 829,48 832,20 838,25 841,36 847,26 850,22 856,26 859,20 865,28 868,30 874,38 877,26 883,24 886,24 892,36 895,20 898,45 901,42 907,40 910,32 916,36 919,40 925,48 928,44 934,34 937,54 943,40 946,48 952,104 955,82 961,86 964,76 970,44 973,60 979,56 982,44 988,50 991,114 997,48 1000,46 1006,72 1009,52 1015,54 1018,50 1024,110 1030,342 1033,82 1039,56 1042,72 1048,52 1051,42 1057,30 1060,44 1066,36 1069,52 1075,40 1078,118 1084,138 1087,110 1093,183 1096,112 1102,92 1105,106 1111,90 1114,60 1120,66 1123,56 1129,44 1132,50 1138,85 1141,40 1147,82 1150,60 1153,84 1159,45 1165,50 1168,60 1174,92 1180,230 1183,362 1189,243 1192,124 1198,138 1201,158 1207,132 1210,162 1216,140 1219,170 1225,205 1228,264 1234,180 1237,138 1243,150 1246,177 1252,168 1255,117 1261,5 1270,260`);
const minuteVolume = document.getElementById('minute-volume');
minuteVolume.setAttribute('fill', '#00007c');
minutes.forEach(([x, n]) => {
  const h = Math.round(n / UNIT);
  rect(minuteVolume, '', px(LEFT, x - 1), 700 - h, 1, h);
});

function plot(id, data) {
  document.getElementById(id).setAttribute('points',
    pairs(data).map(([x, y]) => `${px(LEFT, x)},${px(TOP, y)}`).join(' '));
}
plot('average', `187,478 206,450 212,462 225,458 238,478 252,478 272,495 290,510 350,520 430,525 452,534 475,548 515,568 545,575 590,595 650,610 720,620 760,642 820,646 900,650 960,657 1003,663 1045,675 1080,680 1120,692 1170,698 1215,718 1255,738 1271,740`);
plot('price', `185,465 187,488 192,488 197,462 203,455 206,412 210,452 215,470 220,452 224,530 230,522 234,557 239,555 241,480 246,515 252,510 258,545 264,560 270,560 273,600 278,625 284,652 290,600 294,560 300,598 304,545 312,552 318,568 323,590 329,578 333,612 340,590 347,560 355,590 362,590 370,603 376,580 383,570 388,530 393,560 400,563 408,568 415,590 421,605 427,595 433,620 441,615 446,640 454,665 460,682 467,655 472,678 480,662 486,690 495,720 503,695 512,730 520,680 530,705 540,720 548,735 556,742 561,712 570,735 577,740 584,767 594,750 602,790 608,795 611,735 616,728 621,755 628,738 636,765 645,780 650,762 655,785 661,790 668,775 674,748 684,755 694,770 705,775 714,785 722,800 731,780 738,805 745,825 752,840 759,847 759,770 766,785 773,750 778,740 788,705 795,750 803,728 810,725 815,695 825,678 832,690 838,680 843,715 850,730 858,730 865,722 870,745 875,698 881,705 887,735 892,755 900,760 908,757 914,770 920,800 930,800 935,780 945,800 953,820 960,828 967,815 977,825 988,838 997,815 1003,800 1010,820 1020,838 1028,858 1036,845 1042,855 1049,810 1058,830 1065,845 1075,860 1082,885 1088,895 1093,873 1097,907 1104,890 1112,872 1122,880 1135,870 1140,890 1152,890 1160,877 1168,880 1175,905 1182,910 1190,905 1195,922 1203,915 1210,912 1217,940 1224,970 1234,972 1241,980 1248,983 1253,950 1256,930 1266,925 1270,860`);
```
